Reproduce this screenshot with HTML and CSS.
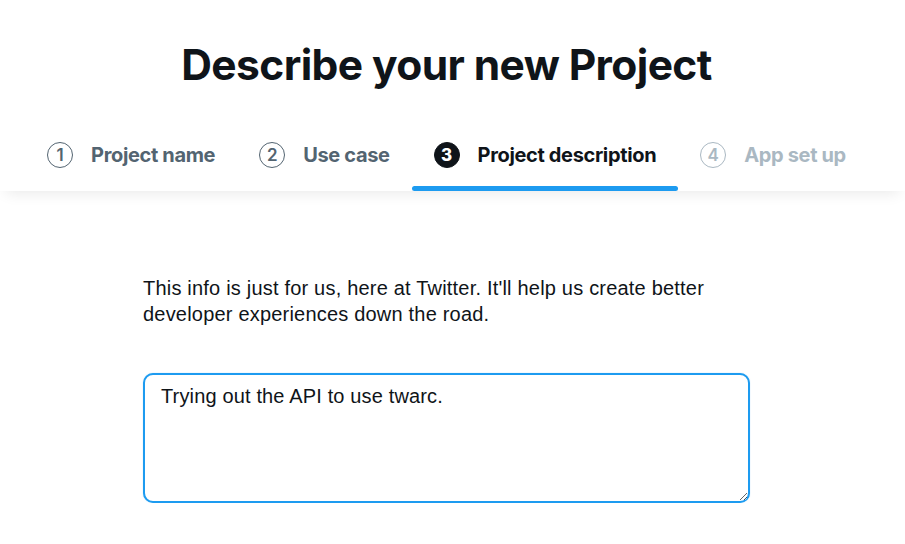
FILE: index.html
```html
<!DOCTYPE html>
<html lang="en">
<head>
<meta charset="utf-8">
<title>Describe your new Project</title>
<link rel="stylesheet" href="styles.css">
</head>
<body>
<header class="header">
  <div class="header-inner">
    <h1 class="title">Describe your new Project</h1>
    <nav class="steps">
      <div class="step done"><span class="num">1</span><span class="label">Project name</span></div>
      <div class="step done"><span class="num">2</span><span class="label">Use case</span></div>
      <div class="step active"><span class="num">3</span><span class="label">Project description</span></div>
      <div class="step todo"><span class="num">4</span><span class="label">App set up</span></div>
    </nav>
  </div>
</header>
<main class="page">
  <div class="content">
    <p class="intro">This info is just for us, here at Twitter. It'll help us create better developer experiences down the road.</p>
    <div class="field">
      <textarea class="desc" autofocus>Trying out the API to use twarc.</textarea>
    </div>
  </div>
</main>
</body>
</html>
```
FILE: styles.css
```css
html, body {
  margin: 0;
  padding: 0;
  background: #ffffff;
}
body {
  font-family: "Liberation Sans", Arial, sans-serif;
  color: #0f1419;
}
.header {
  background: #fff;
  box-shadow: 0 8px 14px -6px rgba(0, 0, 0, 0.09);
  position: relative;
}
.header-inner {
  margin-right: 12px;
  display: flex;
  flex-direction: column;
  align-items: center;
}
.title {
  margin: 0;
  padding-top: 40px;
  font-family: Inter, "Liberation Sans", sans-serif;
  font-weight: 700;
  font-size: 42.5px;
  line-height: 50px;
  letter-spacing: -0.6px;
  color: #0f1419;
}
.steps {
  display: flex;
  margin-top: 34px;
}
.step {
  position: relative;
  display: flex;
  align-items: center;
  gap: 18px;
  padding: 0 22px 5px;
  height: 67px;
  box-sizing: border-box;
  font-family: Inter, "Liberation Sans", sans-serif;
  font-weight: 700;
  font-size: 20px;
  letter-spacing: -0.35px;
}
.num {
  width: 26px;
  height: 26px;
  box-sizing: border-box;
  border-radius: 50%;
  border: 1.5px solid currentColor;
  display: flex;
  align-items: center;
  justify-content: center;
  font-size: 17px;
  font-weight: 600;
  letter-spacing: 0;
}
.done { color: #536471; }
.todo { color: #aab8c2; }
.active { color: #0f1419; }
.active .num {
  background: #0f1419;
  border-color: #0f1419;
  color: #fff;
  font-weight: 800;
}
.active::after {
  content: "";
  position: absolute;
  left: 0;
  right: 0;
  bottom: 0;
  height: 5px;
  border-radius: 3px;
  background: #1d9bf0;
}
.page {
  margin-right: 12px;
}
.content {
  width: 607px;
  margin: 0 auto;
  padding-top: 84px;
}
.intro {
  margin: 0;
  font-size: 20px;
  letter-spacing: 0.2px;
  line-height: 26px;
  color: #0f1419;
}
.field {
  margin-top: 46px;
}
.desc {
  display: block;
  width: 607px;
  height: 130px;
  box-sizing: border-box;
  border: 2px solid #1d9bf0;
  border-radius: 10px;
  padding: 9px 16px;
  font-family: "Liberation Sans", Arial, sans-serif;
  font-size: 20px;
  letter-spacing: 0.15px;
  line-height: 25px;
  color: #0f1419;
  outline: none;
  resize: vertical;
  box-shadow: 0 0 1px rgba(29, 155, 240, 0.5);
}
```
